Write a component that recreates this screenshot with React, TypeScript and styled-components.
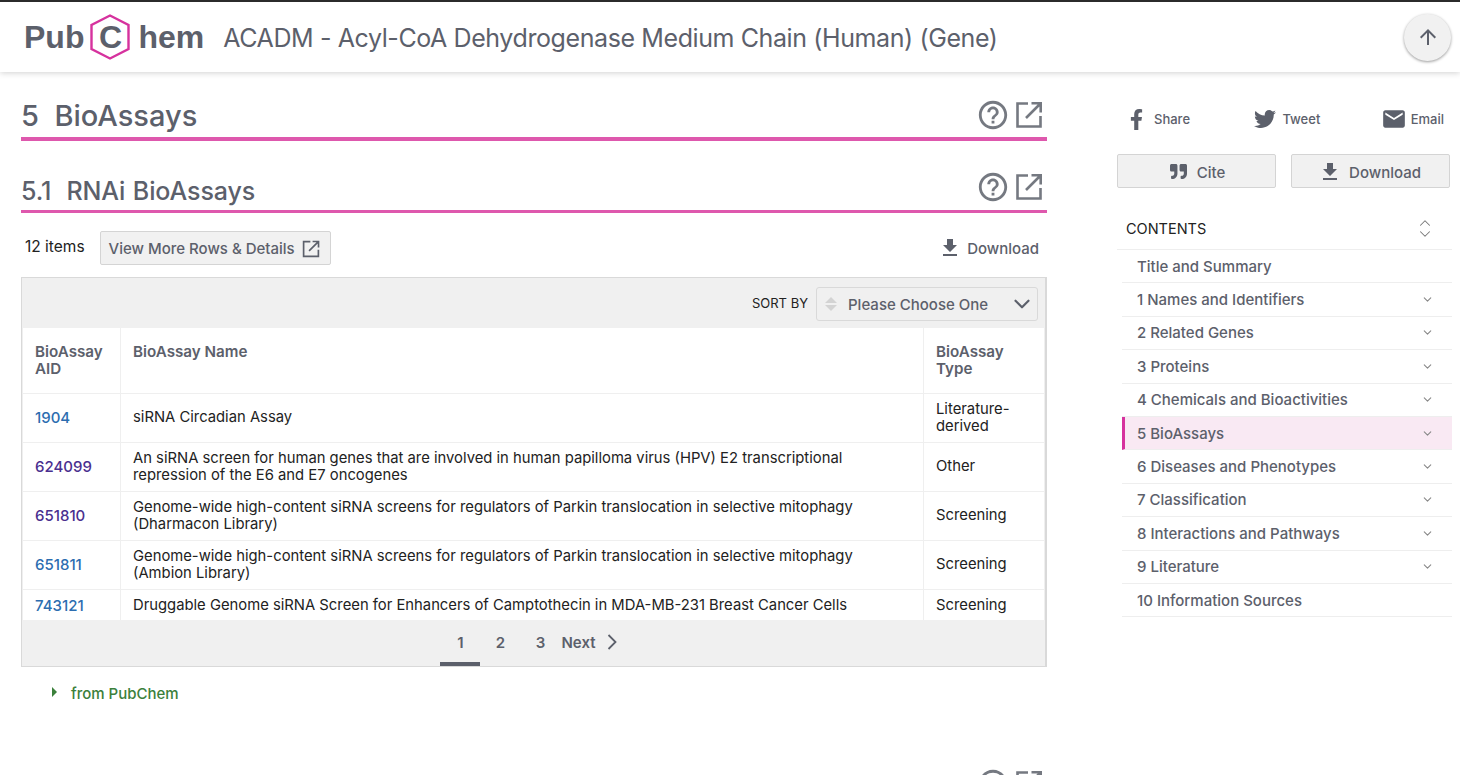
import React from 'react'
import styled, { createGlobalStyle } from 'styled-components'
import { FaFacebookF, FaTwitter, FaQuoteRight } from 'react-icons/fa'
import { MdEmail, MdFileDownload, MdArrowUpward, MdHelpOutline } from 'react-icons/md'
import { ChevronDown, ChevronUp } from 'lucide-react'

const GlobalStyle = createGlobalStyle`
  html, body {
    margin: 0;
    height: 775px;
    overflow: hidden;
    background: #fff;
    font-family: Inter, "Liberation Sans", sans-serif;
    color: #5c606b;
  }
  * { box-sizing: border-box; }
`

const Header = styled.header`
  height: 72px;
  border-top: 2px solid #2b2b2b;
  background: #fff;
  box-shadow: 0 1px 6px rgba(0,0,0,0.18);
  display: flex;
  align-items: center;
  padding: 0 9px 0 24px;
  position: relative;
  z-index: 2;
`

const Logo = styled.div`
  display: flex;
  align-items: center;
  font-family: "Liberation Sans", Arial, sans-serif;
  font-weight: 700;
  font-size: 32px;
  color: #5c606b;
  margin-right: 19px;
`

const LogoHex = styled.span`
  position: relative;
  width: 40px;
  height: 46px;
  margin: 0 8px 0 6px;
  display: flex;
  align-items: center;
  justify-content: center;

  svg {
    position: absolute;
    inset: 0;
  }
`

const PageTitle = styled.h1`
  flex: 1;
  margin: 2px 0 0;
  font-size: 25px;
  letter-spacing: -0.4px;
  font-weight: 400;
  color: #5c606b;
  white-space: nowrap;
`

const UpButton = styled.button`
  width: 47px;
  height: 47px;
  border-radius: 50%;
  border: none;
  background: #f1f1f1;
  color: #5c606b;
  box-shadow: 0 1px 3px rgba(0,0,0,0.4);
  display: flex;
  align-items: center;
  justify-content: center;
  padding: 0;
`

const Layout = styled.div`
  display: flex;
  padding: 0 8px 0 21px;
`

const Main = styled.main`
  width: 1026px;
  margin-right: 70px;
  padding-top: 20px;
`

const SectionHead = styled.div<{ $level: number }>`
  display: flex;
  align-items: center;
  justify-content: space-between;
  border-bottom: ${p => (p.$level === 1 ? '4px' : '3px')} solid #de58ad;
  height: ${p => (p.$level === 1 ? '49px' : '46px')};
  margin-bottom: ${p => (p.$level === 1 ? '26px' : '18px')};
`

const SectionTitle = styled.h2<{ $level: number }>`
  margin: ${p => (p.$level === 1 ? '2px 0 0' : '4px 0 0')};
  font-size: ${p => (p.$level === 1 ? '29px' : '25px')};
  font-weight: 500;
  color: #5c606b;
  white-space: pre;
  word-spacing: ${p => (p.$level === 1 ? '0' : '1px')};
  letter-spacing: ${p => (p.$level === 1 ? '0' : '-0.1px')};
`

const HeadIcons = styled.div<{ $level: number }>`
  display: flex;
  align-items: center;
  gap: 5px;
  padding-right: 4px;
  margin-bottom: ${p => (p.$level === 1 ? '0' : '4px')};
  color: #757981;
`

const ToolRow = styled.div`
  display: flex;
  align-items: center;
  height: 34px;
  margin-bottom: 12px;
  padding-left: 4px;
`

const ItemCount = styled.span`
  font-size: 15.5px;
  color: #222;
  margin-right: 15px;
  margin-top: -4px;
`

const GrayButton = styled.button`
  height: 34px;
  border: 1px solid #d4d4d4;
  border-radius: 2px;
  background: #f1f1f1;
  color: #5c606b;
  font: 500 15px Inter, sans-serif;
  display: flex;
  align-items: center;
  justify-content: center;
  gap: 7px;
  padding: 1px 10px 0 8px;
`

const SideButton = styled(GrayButton)`
  padding-top: 3px;

  svg {
    margin-top: -2px;
  }
`

const CiteIcon = styled(FaQuoteRight)`
  margin: 0 3px 0 4px;
`

const DownloadLink = styled.span`
  margin-left: auto;
  display: flex;
  align-items: center;
  gap: 5px;
  font-size: 15px;
  font-weight: 500;
  padding-right: 8px;
  color: #5c606b;
`

const TableBox = styled.div`
  border: 2px solid #d9d9d9;
  border-width: 1px 2px 1px 1px;
  background: #f0f0f0;
`

const SortBar = styled.div`
  height: 50px;
  display: flex;
  align-items: center;
  justify-content: flex-end;
  gap: 8px;
  padding-right: 7px;
  font-size: 13px;
  color: #222;
`

const SortSelect = styled.div`
  width: 222px;
  height: 34px;
  margin-top: 1px;
  border: 1px solid #d9d9d9;
  border-radius: 3px;
  display: flex;
  align-items: center;
  padding: 1px 2px 0 8px;
  color: #5c606b;
  font-size: 15px;
  font-weight: 500;
`

const SortArrows = styled.span`
  display: flex;
  flex-direction: column;
  gap: 2px;
  margin-right: 11px;
`

const Arrow = styled.i<{ $down?: boolean }>`
  display: block;
  width: 0;
  height: 0;
  border-left: 6px solid transparent;
  border-right: 6px solid transparent;
  border-bottom: ${p => (p.$down ? 'none' : '6px solid #d3d3d3')};
  border-top: ${p => (p.$down ? '6px solid #d3d3d3' : 'none')};
`

const SelectText = styled.span`
  flex: 1;
`

const TableClip = styled.div`
  height: 292px;
  overflow: hidden;
  background: #fff;
`

const Table = styled.table`
  width: 100%;
  border-collapse: collapse;
  table-layout: fixed;
  font-size: 14.8px;
  line-height: 17px;
`

const Th = styled.th<{ $w?: number }>`
  width: ${p => (p.$w ? `${p.$w}px` : 'auto')};
  height: 65px;
  padding: 15px 12px;
  vertical-align: top;
  text-align: left;
  font-size: 15.2px;
  font-weight: 600;
  color: #5c606b;
  border: 1px solid #efefef;
  border-top: none;
`

const Td = styled.td`
  padding: 7px 12px;
  color: #222;
  border: 1px solid #efefef;
  vertical-align: middle;
`

const AidLink = styled.a<{ $visited?: boolean }>`
  color: ${p => (p.$visited ? '#4a2f8f' : '#2c6db0')};
  font-size: 15px;
  font-weight: 500;
  text-decoration: none;
`

const Pager = styled.div`
  height: 46px;
  display: flex;
  justify-content: center;
  align-items: stretch;
  font-size: 15px;
  font-weight: 600;
  color: #5c606b;
`

const PageTab = styled.span<{ $active?: boolean }>`
  min-width: 40px;
  display: flex;
  align-items: center;
  justify-content: center;
  padding-top: 2px;
  border-bottom: 4px solid ${p => (p.$active ? '#5c606b' : 'transparent')};
`

const NextTab = styled(PageTab)`
  padding-left: 1px;
  padding-right: 10px;
  gap: 11px;
`

const FromRow = styled.div`
  display: flex;
  align-items: center;
  gap: 14px;
  margin: 17px 0 0 31px;
  height: 18px;
  color: #3b803b;
  font-size: 15px;
  font-weight: 500;
`

const Caret = styled.i`
  display: block;
  width: 0;
  height: 0;
  margin-top: -3px;
  border-top: 5px solid transparent;
  border-bottom: 5px solid transparent;
  border-left: 5px solid #3b803b;
`

const NextSection = styled.div`
  margin-top: 62px;
`

const Side = styled.aside`
  width: 335px;
  padding-top: 28px;
`

const ShareRow = styled.div`
  display: flex;
  justify-content: space-between;
  height: 38px;
  padding: 0 8px 0 9px;
  align-items: center;
`

const ShareItem = styled.span`
  display: flex;
  align-items: center;
  gap: 7px;
  font-size: 13px;
  font-weight: 500;
  color: #5c606b;
`

const TweetItem = styled(ShareItem)`
  margin-left: 4px;
  gap: 6px;
`

const EmailItem = styled(ShareItem)`
  gap: 4px;
`

const SideButtons = styled.div`
  display: grid;
  grid-template-columns: 159px 159px;
  justify-content: space-between;
  width: 333px;
  margin: 16px 0 22px 0;
`

const ContentsHead = styled.div`
  display: flex;
  align-items: center;
  justify-content: space-between;
  height: 40px;
  padding: 0 18px 2px 9px;
  font-size: 14.5px;
  color: #222;
  border-bottom: 1px solid #eee;
`

const UpDown = styled.span`
  display: flex;
  flex-direction: column;
  color: #777;

  svg + svg {
    margin-top: -7px;
  }
`

const NavList = styled.ul`
  list-style: none;
  margin: 0 0 0 5px;
  padding: 0;
  width: 330px;
`

const NavItem = styled.li<{ $active?: boolean }>`
  height: 33.4px;
  display: flex;
  align-items: center;
  justify-content: space-between;
  padding: 0 18px 0 ${p => (p.$active ? '12px' : '15px')};
  font-size: 15px;
  font-weight: 500;
  color: #5c606b;
  border-bottom: 1px solid #eee;
  background: ${p => (p.$active ? '#f9e9f3' : 'transparent')};
  border-left: ${p => (p.$active ? '3px solid #d6329e' : 'none')};
`

const ExternalIcon: React.FC<{ size: number }> = ({ size }) => (
  <svg width={size} height={size} viewBox="0 0 28 28" fill="none" stroke="currentColor" strokeWidth="2.6">
    <path d="M13 2.5H2.5v23h23V15" />
    <path d="M11 17 25.5 2.5M16.5 2.3h9.2v9.2" />
  </svg>
)

const rows = [
  { aid: '1904', name: 'siRNA Circadian Assay', type: 'Literature-derived' },
  { aid: '624099', visited: true, name: 'An siRNA screen for human genes that are involved in human papilloma virus (HPV) E2 transcriptional repression of the E6 and E7 oncogenes', type: 'Other' },
  { aid: '651810', visited: true, name: 'Genome-wide high-content siRNA screens for regulators of Parkin translocation in selective mitophagy (Dharmacon Library)', type: 'Screening' },
  { aid: '651811', name: 'Genome-wide high-content siRNA screens for regulators of Parkin translocation in selective mitophagy (Ambion Library)', type: 'Screening' },
  { aid: '743121', name: 'Druggable Genome siRNA Screen for Enhancers of Camptothecin in MDA-MB-231 Breast Cancer Cells', type: 'Screening' },
]

const contents = [
  { label: 'Title and Summary', noChevron: true },
  { label: '1 Names and Identifiers' },
  { label: '2 Related Genes' },
  { label: '3 Proteins' },
  { label: '4 Chemicals and Bioactivities' },
  { label: '5 BioAssays', active: true },
  { label: '6 Diseases and Phenotypes' },
  { label: '7 Classification' },
  { label: '8 Interactions and Pathways' },
  { label: '9 Literature' },
  { label: '10 Information Sources', noChevron: true },
]

const App: React.FC = () => {
  return (
    <>
      <GlobalStyle />
      <Header>
        <Logo>
          Pub
          <LogoHex>
            <svg width="40" height="46" viewBox="0 0 40 46" fill="none" stroke="#d6329e" strokeWidth="2.4">
              <path d="M20 1.5 38.5 11v24L20 44.5 1.5 35V11z" />
            </svg>
            C
          </LogoHex>
          hem
        </Logo>
        <PageTitle>ACADM - Acyl-CoA Dehydrogenase Medium Chain (Human) (Gene)</PageTitle>
        <UpButton aria-label="Top"><MdArrowUpward size={24} /></UpButton>
      </Header>
      <Layout>
        <Main>
          <SectionHead $level={1}>
            <SectionTitle $level={1}>5  BioAssays</SectionTitle>
            <HeadIcons $level={1}><MdHelpOutline size={34} /><ExternalIcon size={28} /></HeadIcons>
          </SectionHead>
          <SectionHead $level={2}>
            <SectionTitle $level={2}>5.1  RNAi BioAssays</SectionTitle>
            <HeadIcons $level={2}><MdHelpOutline size={34} /><ExternalIcon size={28} /></HeadIcons>
          </SectionHead>
          <ToolRow>
            <ItemCount>12 items</ItemCount>
            <GrayButton>View More Rows &amp; Details <ExternalIcon size={18} /></GrayButton>
            <DownloadLink><MdFileDownload size={24} />Download</DownloadLink>
          </ToolRow>
          <TableBox>
            <SortBar>
              SORT BY
              <SortSelect>
                <SortArrows><Arrow /><Arrow $down /></SortArrows>
                <SelectText>Please Choose One</SelectText>
                <ChevronDown size={26} strokeWidth={2} />
              </SortSelect>
            </SortBar>
            <TableClip>
              <Table>
                <thead>
                  <tr>
                    <Th $w={98}>BioAssay AID</Th>
                    <Th $w={803}>BioAssay Name</Th>
                    <Th>BioAssay Type</Th>
                  </tr>
                </thead>
                <tbody>
                  {rows.map(r => (
                    <tr key={r.aid}>
                      <Td><AidLink $visited={r.visited}>{r.aid}</AidLink></Td>
                      <Td>{r.name}</Td>
                      <Td>{r.type}</Td>
                    </tr>
                  ))}
                </tbody>
              </Table>
            </TableClip>
            <Pager>
              <PageTab $active>1</PageTab>
              <PageTab>2</PageTab>
              <PageTab>3</PageTab>
              <NextTab>
                Next
                <svg width="10" height="16" viewBox="0 0 10 16" fill="none" stroke="currentColor" strokeWidth="1.8">
                  <path d="M1.5 1 8.5 8 1.5 15" />
                </svg>
              </NextTab>
            </Pager>
          </TableBox>
          <FromRow><Caret />from PubChem</FromRow>
          <NextSection>
            <SectionHead $level={2}>
              <SectionTitle $level={2}>5.2  Gene Ontology</SectionTitle>
              <HeadIcons $level={2}><MdHelpOutline size={34} /><ExternalIcon size={28} /></HeadIcons>
            </SectionHead>
          </NextSection>
        </Main>
        <Side>
          <ShareRow>
            <ShareItem><FaFacebookF size={21} />Share</ShareItem>
            <TweetItem><FaTwitter size={22} />Tweet</TweetItem>
            <EmailItem><MdEmail size={26} />Email</EmailItem>
          </ShareRow>
          <SideButtons>
            <SideButton><CiteIcon size={17} />Cite</SideButton>
            <SideButton><MdFileDownload size={24} />Download</SideButton>
          </SideButtons>
          <ContentsHead>
            CONTENTS
            <UpDown><ChevronUp size={18} strokeWidth={1.4} /><ChevronDown size={18} strokeWidth={1.4} /></UpDown>
          </ContentsHead>
          <NavList>
            {contents.map(c => (
              <NavItem key={c.label} $active={c.active}>
                {c.label}
                {!c.noChevron && <ChevronDown size={13} color="#888" />}
              </NavItem>
            ))}
          </NavList>
        </Side>
      </Layout>
    </>
  )
}

export default App
